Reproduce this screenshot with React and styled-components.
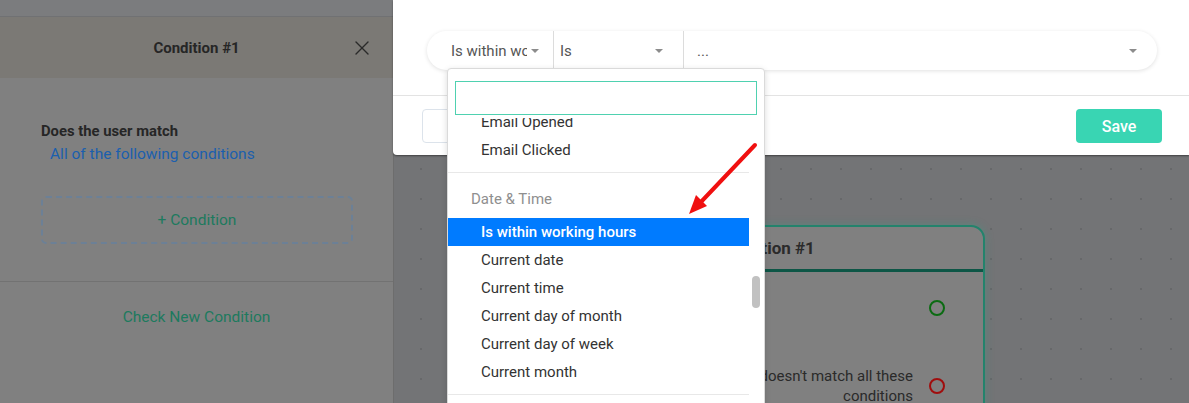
import React, { useLayoutEffect, useRef } from 'react';
import styled, { createGlobalStyle } from 'styled-components';
import { X } from 'lucide-react';

const Global = createGlobalStyle`
  html, body { margin: 0; padding: 0; background: #737476; }
  body { font-family: Roboto, "Noto Sans", "Liberation Sans", sans-serif; }
  * { box-sizing: border-box; }
`;

const Screen = styled.div`
  position: relative;
  width: 1189px;
  height: 403px;
  overflow: hidden;
  display: flex;
`;

/* ---------- dimmed sidebar ---------- */
const Sidebar = styled.aside`
  width: 394px;
  flex: none;
  height: 100%;
  background: #808080;
  border-right: 1px solid #6d6d6d;
  display: flex;
  flex-direction: column;
`;
const TopStrip = styled.div`
  height: 17px;
  flex: none;
  background: #7b7c7e;
  border-bottom: 1px solid #707173;
`;
const SideHeader = styled.header`
  height: 61px;
  flex: none;
  background: #7b7975;
  display: grid;
  grid-template-columns: 1fr auto 1fr;
  align-items: center;
`;
const SideTitle = styled.h2`
  grid-column: 2;
  margin: 0;
  font-size: 15px;
  font-weight: 700;
  color: #262626;
`;
const CloseButton = styled.button`
  grid-column: 3;
  justify-self: end;
  margin-right: 19px;
  width: 24px;
  height: 24px;
  padding: 0;
  border: 0;
  background: transparent;
  color: #2a2a2a;
  display: flex;
`;
const MatchSection = styled.section`
  padding: 43px 40px 37px 41px;
  border-bottom: 1px solid #727272;
`;
const MatchLabel = styled.div`
  font-size: 14.8px;
  font-weight: 700;
  line-height: 20px;
  color: #262626;
`;
const MatchLink = styled.div`
  margin: 3px 0 0 9px;
  font-size: 15.5px;
  line-height: 20px;
  color: #1b5fae;
`;
const AddCondition = styled.div`
  margin-top: 32px;
  height: 48px;
  border: 2px dashed #6c8096;
  border-radius: 5px;
  display: flex;
  align-items: center;
  justify-content: center;
  font-size: 15.5px;
  color: #1d7a5e;
`;
const CheckSection = styled.section`
  padding-top: 25px;
  text-align: center;
  font-size: 15.5px;
  line-height: 20px;
  color: #1d7a5e;
`;

/* ---------- dimmed canvas ---------- */
const Canvas = styled.main`
  position: relative;
  flex: 1;
  height: 100%;
  background-color: #737476;
  background-image: radial-gradient(circle, #67686a 1px, transparent 1.3px);
  background-size: 30px 30px;
  background-position: 12px 4px;
`;
const Node = styled.div`
  position: absolute;
  left: 153px;
  top: 225px;
  width: 438px;
  height: 220px;
  background: #808080;
  border: 2px solid #23836c;
  border-radius: 4px 14px 0 0;
  box-shadow: 0 0 9px rgba(40, 170, 140, 0.35);
`;
const NodeHeader = styled.div`
  height: 45px;
  border-bottom: 3px solid #0d5646;
  display: flex;
  align-items: center;
  justify-content: center;
  font-size: 17px;
  font-weight: 700;
  color: #2b2b2b;
`;
const NodeBody = styled.div`
  padding: 26px 38px 0 20px;
  display: flex;
  flex-direction: column;
  gap: 48px;
`;
const Outcome = styled.div`
  display: grid;
  grid-template-columns: 1fr 16px;
  column-gap: 16px;
  align-items: center;
  font-size: 15px;
  line-height: 20px;
  color: #2a2a2a;
`;
const OutcomeText = styled.div`
  justify-self: ${(p) => (p.$end ? 'end' : 'start')};
  max-width: 200px;
  text-align: ${(p) => (p.$end ? 'right' : 'left')};
`;
const Ring = styled.span`
  width: 16px;
  height: 16px;
  border-radius: 50%;
  border: 2px solid ${(p) => p.$color};
`;

/* ---------- modal ---------- */
const Modal = styled.div`
  position: absolute;
  top: 0;
  left: 393px;
  right: 0;
  height: 155px;
  background: #fff;
  border-bottom-left-radius: 4px;
  box-shadow: 0 1px 2px rgba(0, 0, 0, 0.45);
  z-index: 5;
`;
const ModalBody = styled.div`
  height: 96px;
  padding: 31px 32px 0 34px;
  border-bottom: 1px solid #e3e3e3;
`;
const Pill = styled.div`
  position: relative;
  z-index: 3;
  height: 39px;
  display: flex;
  border-radius: 20px;
  background: #fff;
  box-shadow: 0 1px 4px rgba(0, 0, 0, 0.12);
`;
const Segment = styled.div`
  display: flex;
  align-items: center;
  gap: 4px;
  width: ${(p) => (p.$width ? `${p.$width}px` : 'auto')};
  flex: ${(p) => (p.$width ? 'none' : '1')};
  padding: 0 ${(p) => p.$pr}px 0 ${(p) => p.$pl}px;
  border-right: ${(p) => (p.$divider ? '1px solid #dcdcdc' : '0')};
  font-size: 15px;
  color: #555;
`;
const SegmentText = styled.span`
  flex: 1;
  overflow: hidden;
  white-space: nowrap;
`;
const Caret = styled.span`
  flex: none;
  width: 0;
  height: 0;
  border-left: 4px solid transparent;
  border-right: 4px solid transparent;
  border-top: 4px solid #8c8c8c;
`;
const ModalFooter = styled.div`
  padding: 13px 27px 0 29px;
  display: flex;
  justify-content: space-between;
`;
const CancelButton = styled.button`
  width: 112px;
  height: 34px;
  border: 1px solid #dce3eb;
  border-radius: 4px;
  background: #fff;
  font: inherit;
  font-size: 15px;
  color: #555;
`;
const SaveButton = styled.button`
  width: 86px;
  height: 34px;
  border: 0;
  border-radius: 4px;
  background: #39d5b3;
  color: #fff;
  font: inherit;
  font-size: 16px;
  font-weight: 500;
`;

/* ---------- dropdown ---------- */
const Dropdown = styled.div`
  position: absolute;
  top: 37px;
  left: 20px;
  width: 318px;
  height: 360px;
  background: #fff;
  border: 1px solid #dadada;
  border-radius: 4px;
  box-shadow: 0 2px 6px rgba(0, 0, 0, 0.15);
  display: flex;
  flex-direction: column;
`;
const SearchWrap = styled.div`
  padding: 12px 7px 3px;
  flex: none;
`;
const SearchInput = styled.input`
  display: block;
  width: 100%;
  height: 34px;
  border: 1px solid #4fd1b0;
  outline: none;
  font: inherit;
  font-size: 15px;
  padding: 0 8px;
`;
const List = styled.div`
  flex: 1;
  margin-right: 15px;
  overflow: hidden;
`;
const Group = styled.div`
  padding-bottom: 8px;
  border-bottom: 1px solid #e8e8e8;
`;
const GroupLabel = styled.div`
  margin: 12px 0 5px;
  padding-left: 23px;
  line-height: 28px;
  font-size: 15px;
  color: #8f8f8f;
`;
const Option = styled.div`
  padding-left: 33px;
  line-height: 28px;
  font-size: 15px;
  white-space: nowrap;
  color: ${(p) => (p.$active ? '#fff' : '#333')};
  background: ${(p) => (p.$active ? '#007bff' : 'transparent')};
  font-weight: ${(p) => (p.$active ? 500 : 400)};
`;
const Thumb = styled.span`
  position: absolute;
  top: 207px;
  right: 4px;
  width: 8px;
  height: 32px;
  border-radius: 4px;
  background: #c1c1c1;
`;

const Annotation = styled.svg`
  position: absolute;
  left: 0;
  top: 0;
  width: 1189px;
  height: 403px;
  pointer-events: none;
  z-index: 10;
`;

const groups = [
  { label: 'User', items: ['First name', 'Last name', 'Email', 'Phone'] },
  { label: 'Email', items: ['Email Sent', 'Email Opened', 'Email Clicked'] },
  {
    label: 'Date & Time',
    items: [
      'Is within working hours',
      'Current date',
      'Current time',
      'Current day of month',
      'Current day of week',
      'Current month',
    ],
  },
  { label: 'Other', items: ['Current year', 'Random number'] },
];

export default function App() {
  const listRef = useRef(null);
  useLayoutEffect(() => {
    if (listRef.current) listRef.current.scrollTop = 249;
  }, []);

  return (
    <Screen>
      <Global />
      <Sidebar>
        <TopStrip />
        <SideHeader>
          <SideTitle>Condition #1</SideTitle>
          <CloseButton aria-label="Close">
            <X size={24} strokeWidth={1.4} />
          </CloseButton>
        </SideHeader>
        <MatchSection>
          <MatchLabel>Does the user match</MatchLabel>
          <MatchLink>All of the following conditions</MatchLink>
          <AddCondition>+ Condition</AddCondition>
        </MatchSection>
        <CheckSection>Check New Condition</CheckSection>
      </Sidebar>

      <Canvas>
        <Node>
          <NodeHeader>Condition #1</NodeHeader>
          <NodeBody>
            <Outcome>
              <OutcomeText>Matches</OutcomeText>
              <Ring $color="#0b6b12" />
            </Outcome>
            <Outcome>
              <OutcomeText $end>User doesn't match all these conditions</OutcomeText>
              <Ring $color="#a00d0d" />
            </Outcome>
          </NodeBody>
        </Node>
      </Canvas>

      <Modal>
        <ModalBody>
          <Pill>
            <Segment $width={127} $pl={24} $pr={14} $divider>
              <SegmentText>Is within working hours</SegmentText>
              <Caret />
            </Segment>
            <Segment $width={130} $pl={6} $pr={20} $divider>
              <SegmentText>Is</SegmentText>
              <Caret />
            </Segment>
            <Segment $pl={13} $pr={20}>
              <SegmentText>...</SegmentText>
              <Caret />
            </Segment>
            <Dropdown>
              <SearchWrap>
                <SearchInput />
              </SearchWrap>
              <List ref={listRef}>
                {groups.map((g) => (
                  <Group key={g.label}>
                    <GroupLabel>{g.label}</GroupLabel>
                    {g.items.map((it) => (
                      <Option key={it} $active={it === 'Is within working hours'}>
                        {it}
                      </Option>
                    ))}
                  </Group>
                ))}
              </List>
              <Thumb />
            </Dropdown>
          </Pill>
        </ModalBody>
        <ModalFooter>
          <CancelButton>Cancel</CancelButton>
          <SaveButton>Save</SaveButton>
        </ModalFooter>
      </Modal>

      <Annotation viewBox="0 0 1189 403">
        <line x1="755" y1="145" x2="700" y2="203" stroke="#f01010" strokeWidth="4" strokeLinecap="round" />
        <polygon points="689,214 707,206 696,195" fill="#f01010" />
      </Annotation>
    </Screen>
  );
}
